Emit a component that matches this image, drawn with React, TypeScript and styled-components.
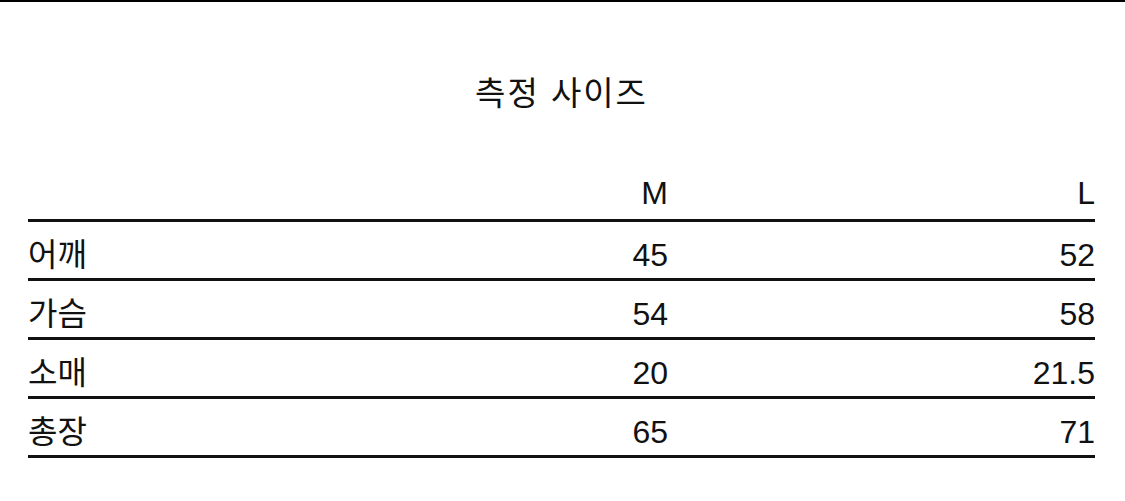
import React from "react";
import styled, { createGlobalStyle } from "styled-components";

const sizes = [
  { part: "어깨", m: "45", l: "52" },
  { part: "가슴", m: "54", l: "58" },
  { part: "소매", m: "20", l: "21.5" },
  { part: "총장", m: "65", l: "71" },
];

const App: React.FC = () => {
  return (
    <>
      <GlobalStyle />
      <Page>
        <Title>측정 사이즈</Title>
        <SizeTable>
          <Row $header>
            <Cell $header />
            <Cell $header $num>M</Cell>
            <Cell $header $num>L</Cell>
          </Row>
          {sizes.map((s) => (
            <Row key={s.part}>
              <Cell>{s.part}</Cell>
              <Cell $num>{s.m}</Cell>
              <Cell $num>{s.l}</Cell>
            </Row>
          ))}
        </SizeTable>
      </Page>
    </>
  );
};

const GlobalStyle = createGlobalStyle`
  html, body {
    margin: 0;
    padding: 0;
    background: #fff;
  }
  body {
    font-family: "Liberation Sans", "Noto Sans CJK KR", sans-serif;
    color: #111;
  }
`;

const Page = styled.div`
  width: 1125px;
  height: 501px;
  box-sizing: border-box;
  border-top: 2px solid #000;
  padding: 0 30px 0 28px;
  overflow: hidden;
`;

const Title = styled.h1`
  margin: 71px 0 0;
  height: 42px;
  line-height: 42px;
  text-align: center;
  font-size: 33px;
  font-weight: 400;
  letter-spacing: 2px;
`;

const SizeTable = styled.div`
  margin-top: 48px;
  display: flex;
  flex-direction: column;
`;

const Row = styled.div<{ $header?: boolean }>`
  display: grid;
  grid-template-columns: 420px 220px 1fr;
  height: 56px;
  border-bottom: 3px solid #111;
`;

const Cell = styled.div<{ $num?: boolean; $header?: boolean }>`
  padding-top: ${(p) => (p.$header ? "7px" : "10px")};
  line-height: 46px;
  font-size: 32px;
  text-align: ${(p) => (p.$num ? "right" : "left")};
  white-space: nowrap;
`;

export default App;
